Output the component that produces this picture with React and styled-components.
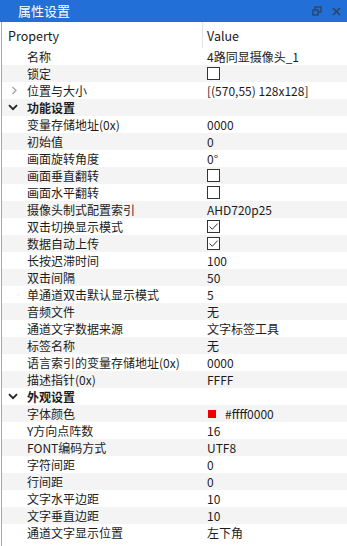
import React from "react";
import styled, { createGlobalStyle } from "styled-components";

const Global = createGlobalStyle`
  html, body { margin: 0; padding: 0; background: #ffffff; }
  body { font-family: "Noto Sans CJK SC", "Noto Sans", sans-serif; }
`;

const Panel = styled.div`
  width: 347px;
  height: 546px;
  display: flex;
  flex-direction: column;
  background: #ffffff;
  overflow: hidden;
`;

const TitleBar = styled.div`
  height: 22px;
  flex: none;
  background: #226fd7;
  display: flex;
  align-items: center;
  padding: 0 6px 0 18px;
  color: #ffffff;
  font-size: 13px;
`;

const TitleText = styled.div`
  flex: 1;
  line-height: 22px;
`;

const TitleButtons = styled.div`
  display: flex;
  align-items: center;
  gap: 10px;
  color: #33415c;
`;

const Body = styled.div`
  flex: 1;
  margin-left: 1px;
  border-left: 1px solid #a8a8a8;
  display: flex;
  flex-direction: column;
`;

const HeaderRow = styled.div`
  height: 26px;
  display: grid;
  grid-template-columns: 200px 1fr;
  font-size: 12.5px;
  color: #1a1a1a;
`;

const HeaderCell = styled.div`
  display: flex;
  align-items: center;
  padding-left: ${(p) => p.$pad}px;
  border-left: ${(p) => (p.$sep ? "1px solid #e3e3e3" : "none")};
`;

const Row = styled.div`
  height: 17px;
  display: grid;
  grid-template-columns: 200px 1fr;
  background: ${(p) => (p.$alt ? "#f4f4f4" : "#ffffff")};
  font-size: 12px;
  color: #1c1c1c;
  line-height: 17px;
`;

const NameCell = styled.div`
  position: relative;
  padding-left: 25px;
  white-space: nowrap;
  font-weight: ${(p) => (p.$bold ? 700 : 400)};
`;

const ValueCell = styled.div`
  display: flex;
  align-items: center;
  padding-left: 5px;
  white-space: nowrap;
`;

const Toggle = styled.span`
  position: absolute;
  left: ${(p) => p.$left}px;
  top: 0;
  height: 17px;
  display: flex;
  align-items: center;
`;

const Box = styled.span`
  width: 11px;
  height: 11px;
  border: 1px solid #333333;
  background: #ffffff;
  display: inline-flex;
  align-items: center;
  justify-content: center;
`;

const Swatch = styled.span`
  width: 8px;
  height: 8px;
  background: #ee0000;
  margin-left: 1px;
  margin-right: 9px;
`;

const Check = ({ checked }) => (
  <Box>
    {checked && (
      <svg width="11" height="11" viewBox="0 0 11 11">
        <path d="M1.5 5.5 L4.3 8.3 L9.6 2.6" fill="none" stroke="#333" strokeWidth="1" />
      </svg>
    )}
  </Box>
);

const ChevronRight = () => (
  <svg width="7" height="9" viewBox="0 0 7 9">
    <path d="M1.5 1 L5 4.5 L1.5 8" fill="none" stroke="#a0a0a0" strokeWidth="1.2" />
  </svg>
);

const ChevronDown = () => (
  <svg width="10" height="7" viewBox="0 0 10 7">
    <path d="M1 1.2 L5 5.2 L9 1.2" fill="none" stroke="#222" strokeWidth="1.8" />
  </svg>
);

const rows = [
  { n: "名称", v: "4路同显摄像头_1" },
  { n: "锁定", c: false },
  { n: "位置与大小", v: "[(570,55) 128x128]", sub: true },
  { n: "功能设置", cat: true },
  { n: "变量存储地址(0x)", v: "0000" },
  { n: "初始值", v: "0" },
  { n: "画面旋转角度", v: "0°" },
  { n: "画面垂直翻转", c: false },
  { n: "画面水平翻转", c: false },
  { n: "摄像头制式配置索引", v: "AHD720p25" },
  { n: "双击切换显示模式", c: true },
  { n: "数据自动上传", c: true },
  { n: "长按迟滞时间", v: "100" },
  { n: "双击间隔", v: "50" },
  { n: "单通道双击默认显示模式", v: "5" },
  { n: "音频文件", v: "无" },
  { n: "通道文字数据来源", v: "文字标签工具" },
  { n: "标签名称", v: "无" },
  { n: "语言索引的变量存储地址(0x)", v: "0000" },
  { n: "描述指针(0x)", v: "FFFF" },
  { n: "外观设置", cat: true },
  { n: "字体颜色", v: "#ffff0000", color: true },
  { n: "Y方向点阵数", v: "16" },
  { n: "FONT编码方式", v: "UTF8" },
  { n: "字符间距", v: "0" },
  { n: "行间距", v: "0" },
  { n: "文字水平边距", v: "10" },
  { n: "文字垂直边距", v: "10" },
  { n: "通道文字显示位置", v: "左下角" },
];

export default function App() {
  return (
    <>
      <Global />
      <Panel>
        <TitleBar>
          <TitleText>属性设置</TitleText>
          <TitleButtons>
            <svg width="10" height="10" viewBox="0 0 10 10">
              <rect x="3" y="1" width="6" height="5" fill="none" stroke="#33415c" strokeWidth="1.3" />
              <rect x="1" y="4" width="5" height="5" fill="#226fd7" stroke="#33415c" strokeWidth="1.3" />
            </svg>
            <svg width="9" height="9" viewBox="0 0 9 9">
              <path d="M1 1 L8 8 M8 1 L1 8" stroke="#33415c" strokeWidth="1.5" />
            </svg>
          </TitleButtons>
        </TitleBar>
        <Body>
          <HeaderRow>
            <HeaderCell $pad={6}>Property</HeaderCell>
            <HeaderCell $pad={4} $sep>Value</HeaderCell>
          </HeaderRow>
          {rows.map((r, i) => (
            <Row key={i} $alt={i % 2 === 1}>
              <NameCell $bold={r.cat}>
                {r.sub && (
                  <Toggle $left={9}>
                    <ChevronRight />
                  </Toggle>
                )}
                {r.cat && (
                  <Toggle $left={6}>
                    <ChevronDown />
                  </Toggle>
                )}
                {r.n}
              </NameCell>
              <ValueCell>
                {r.c !== undefined && <Check checked={r.c} />}
                {r.color && <Swatch />}
                {r.v}
              </ValueCell>
            </Row>
          ))}
        </Body>
      </Panel>
    </>
  );
}
